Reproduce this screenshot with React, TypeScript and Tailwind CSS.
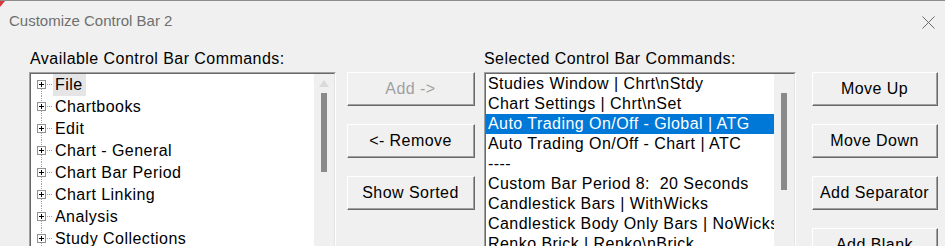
import React from "react";

const treeItems = [
  "File",
  "Chartbooks",
  "Edit",
  "Chart - General",
  "Chart Bar Period",
  "Chart Linking",
  "Analysis",
  "Study Collections",
];

const selectedItems = [
  "Studies Window | Chrt\\nStdy",
  "Chart Settings | Chrt\\nSet",
  "Auto Trading On/Off - Global | ATG",
  "Auto Trading On/Off - Chart | ATC",
  "----",
  "Custom Bar Period 8:  20 Seconds",
  "Candlestick Bars | WithWicks",
  "Candlestick Body Only Bars | NoWicks",
  "Renko Brick | Renko\\nBrick",
];

function Button({ label, disabled }: { label: string; disabled?: boolean }) {
  return (
    <div className="h-[34px] border-t border-l border-white border-r border-b border-r-[#696969] border-b-[#696969]">
      <div
        className={
          "flex h-full items-center justify-center border-r border-b border-[#a0a0a0] bg-[#f0f0f0] " +
          (disabled ? "text-[#a0a0a0]" : "text-black")
        }
      >
        {label}
      </div>
    </div>
  );
}

function TreeNode({ first }: { first: boolean }) {
  return (
    <svg width="16" height="22" className="shrink-0">
      {!first && (
        <line x1="4.5" y1="0" x2="4.5" y2="6" stroke="#a0a0a0" strokeDasharray="1 1" />
      )}
      <line x1="4.5" y1="15" x2="4.5" y2="22" stroke="#a0a0a0" strokeDasharray="1 1" />
      <line x1="10" y1="10.5" x2="16" y2="10.5" stroke="#a0a0a0" strokeDasharray="1 1" />
      <rect x="0.5" y="6.5" width="8" height="8" fill="#fff" stroke="#919191" />
      <line x1="2" y1="10.5" x2="7" y2="10.5" stroke="#000" />
      <line x1="4.5" y1="8" x2="4.5" y2="13" stroke="#000" />
    </svg>
  );
}

function ListBox({
  width,
  thumbHeight,
  showArrow,
  children,
}: {
  width: string;
  thumbHeight: string;
  showArrow?: boolean;
  children: React.ReactNode;
}) {
  return (
    <div className={"h-[190px] border-t border-l border-[#a0a0a0] border-r border-b border-r-white border-b-white " + width}>
      <div className="flex h-full border-t border-l border-[#696969] border-r border-b border-r-[#e3e3e3] border-b-[#e3e3e3]">
        <div className="flex-1 overflow-hidden bg-white">{children}</div>
        <div className="flex w-[20px] shrink-0 flex-col items-center bg-[#f0f0f0]">
          <div className="flex h-[19px] w-full items-center justify-center">
            {showArrow && (
              <svg width="10" height="7">
                <path d="M5 0 L10 7 L0 7 Z" fill="#dadada" />
              </svg>
            )}
          </div>
          <div className={"w-[6px] bg-[#8a8a8a] " + thumbHeight} />
        </div>
      </div>
    </div>
  );
}

export default function App() {
  return (
    <div className="relative h-[246px] w-[945px] overflow-hidden border-t border-[#8c8c8c] bg-[#f0f0f0] font-['Liberation_Sans',Arial,sans-serif] text-[16px] tracking-[0.45px] text-black">
      <svg width="5" height="6" className="absolute left-0 top-0">
        <path d="M0 0 L5 0 L0 6 Z" fill="#d9363e" />
      </svg>

      {/* Title bar */}
      <div className="flex items-center justify-between pt-[10px] pl-[9px] pr-[10px]">
        <div className="h-[20px] text-[15px] leading-[20px] tracking-normal text-[#6f6f6f]">
          Customize Control Bar 2
        </div>
        <svg width="13" height="13" viewBox="0 0 13 13" className="mt-[2px]">
          <path d="M0.5 0.5 L12.5 12.5 M12.5 0.5 L0.5 12.5" stroke="#6a6a6a" strokeWidth="1" />
        </svg>
      </div>

      {/* Body */}
      <div className="mt-[18px] flex pl-[29px] leading-[20px]">
        <div className="flex flex-col">
          <div className="h-[20px] pl-[1px]">Available Control Bar Commands:</div>
          <div className="mt-[3px]">
            <ListBox width="w-[307px]" thumbHeight="h-[79px]" showArrow>
              <div className="flex flex-col pl-[6px]">
                {treeItems.map((item, i) => (
                  <div key={item} className="flex h-[22px] items-center">
                    <TreeNode first={i === 0} />
                    <span
                      className={
                        "flex h-[22px] items-center whitespace-nowrap pl-[2px] pr-[3px] " +
                        (i === 0 ? "bg-[#e5e5e5]" : "")
                      }
                    >
                      {item}
                    </span>
                  </div>
                ))}
              </div>
            </ListBox>
          </div>
        </div>

        <div className="ml-[11px] mt-[23px] flex w-[128px] flex-col gap-[18px]">
          <Button label="Add ->" disabled />
          <Button label="<- Remove" />
          <Button label="Show Sorted" />
        </div>

        <div className="ml-[9px] flex flex-col">
          <div className="h-[20px]">Selected Control Bar Commands:</div>
          <div className="mt-[3px]">
            <ListBox width="w-[312px]" thumbHeight="h-[97px]">
              <div className="flex flex-col">
                {selectedItems.map((item, i) => (
                  <div
                    key={item}
                    className={
                      "h-[20px] whitespace-pre pl-[2px] leading-[20px] " +
                      (i === 2 ? "bg-[#0078d7] text-white" : "")
                    }
                  >
                    {item}
                  </div>
                ))}
              </div>
            </ListBox>
          </div>
        </div>

        <div className="ml-[16px] mt-[23px] flex w-[126px] flex-col gap-[18px]">
          <Button label="Move Up" />
          <Button label="Move Down" />
          <Button label="Add Separator" />
          <Button label="Add Blank" />
        </div>
      </div>
    </div>
  );
}
